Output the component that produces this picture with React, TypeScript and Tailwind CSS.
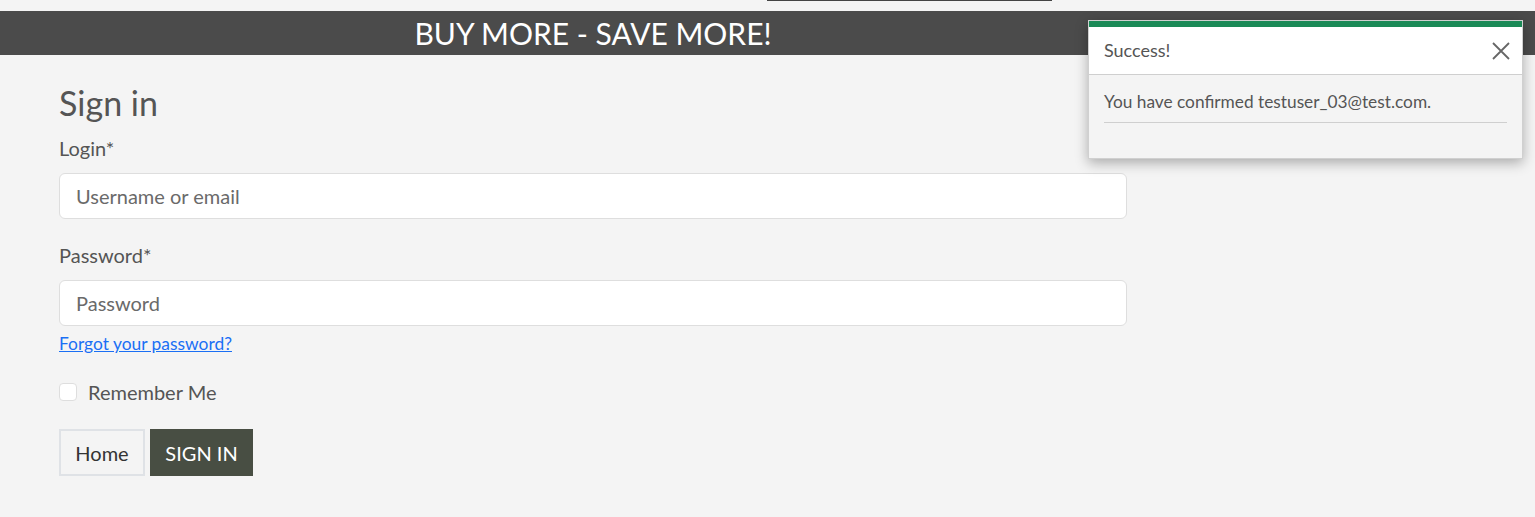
import React from 'react';

const font = { fontFamily: 'Lato, "Open Sans", sans-serif' };

function Field({ label, placeholder, type = 'text' }: { label: string; placeholder: string; type?: string }) {
  return (
    <div>
      <label className="block text-[20px] leading-[30px] text-[#555]">{label}</label>
      <input
        type={type}
        placeholder={placeholder}
        className="mt-[10px] block h-[46px] w-full rounded-[6px] border border-[#dedede] bg-white px-4 text-[20px] text-[#555] placeholder:text-[#6a6a6a] outline-none"
      />
    </div>
  );
}

export default function App() {
  return (
    <div className="relative min-h-[517px] bg-[#f4f4f4]" style={font}>
      {/* top nav remnant */}
      <div className="h-[11px]">
        <div className="ml-[767px] h-px w-[285px] bg-[#444]" />
      </div>

      {/* promo banner */}
      <div className="flex h-[44px] items-center bg-[#4b4b4b]">
        <div className="w-[1186px] text-center text-[30px] leading-none text-white">BUY MORE - SAVE MORE!</div>
      </div>

      {/* sign in form */}
      <div className="px-[59px] pt-[27px]">
        <div className="w-[1068px]">
          <h1 className="text-[34px] leading-[42px] text-[#555]">Sign in</h1>
          <div className="mt-[9px]">
            <Field label="Login*" placeholder="Username or email" />
          </div>
          <div className="mt-[21px]">
            <Field label="Password*" placeholder="Password" type="password" />
          </div>
          <a href="#" className="mt-[6px] block text-[17.4px] leading-[24px] text-[#1a6ff4] underline">
            Forgot your password?
          </a>
          <label className="mt-[21px] flex h-[30px] items-center gap-[11px]">
            <span className="h-[18px] w-[18px] rounded-[4px] border border-[#dedede] bg-white" />
            <span className="text-[20px] leading-[30px] text-[#555]">Remember Me</span>
          </label>
          <div className="mt-[22px] flex gap-[5px]">
            <button className="h-[47px] w-[86px] border-2 border-[#dfe2e6] bg-[#f4f4f4] text-[20px] text-[#333]">Home</button>
            <button className="h-[47px] w-[103px] bg-[#484e43] text-[20px] text-white">SIGN IN</button>
          </div>
        </div>
      </div>

      {/* toast */}
      <div className="absolute left-[1088px] top-[20px] w-[435px] border border-[#d0d0d0] bg-[#f4f4f4] shadow-[0_4px_12px_rgba(0,0,0,0.3)]">
        <div className="h-[6px] bg-[#1b8a57]" />
        <div className="flex h-[48px] items-center justify-between border-b border-[#cfcfcf] bg-white pl-[15px] pr-[11px]">
          <span className="text-[18px] text-[#555]">Success!</span>
          <svg width="20" height="20" viewBox="0 0 20 20" className="text-[#666]">
            <path d="M2 2 L18 18 M18 2 L2 18" stroke="currentColor" strokeWidth="1.8" fill="none" />
          </svg>
        </div>
        <div className="px-[15px] pt-[16px] pb-[35px]">
          <p className="border-b border-[#cfcfcf] pb-[10px] text-[17.3px] leading-[21px] text-[#555]">
            You have confirmed testuser_03@test.com.
          </p>
        </div>
      </div>
    </div>
  );
}
